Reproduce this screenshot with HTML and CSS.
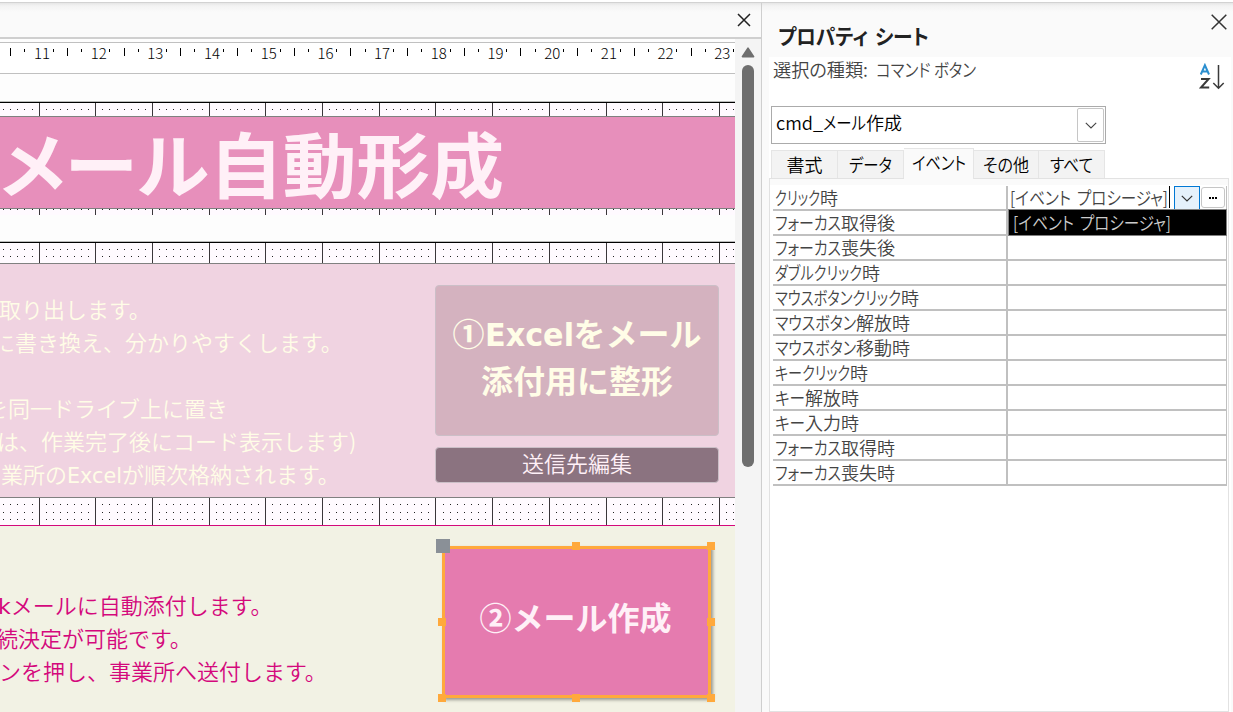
FILE: index.html
```html
<!DOCTYPE html>
<html lang="ja">
<head>
    <meta charset="UTF-8">
    <meta name="viewport" content="width=device-width, initial-scale=1.0">
    <title>プロパティ シート</title>
    <link rel="stylesheet" href="styles.css">
</head>
<body>
    <div class="top-edge"></div>
    <div class="workspace">
        <div class="designer">
            <div class="tab-bar">
                <svg width="14" height="14" viewBox="0 0 14 14"><path d="M1 1L13 13M13 1L1 13" stroke="#222" stroke-width="1.5"/></svg>
            </div>
            <div class="designer-body">
                <div class="form">
                    <svg class="ruler" id="ruler" width="735" height="32"></svg>
                    <div class="blank blank-top"></div>
                    <svg class="grid" data-dots="6" width="735" height="13"></svg>
                    <div class="form-header"><span class="fit" data-w="504">メール自動形成</span></div>
                    <svg class="grid" data-dots="0" width="735" height="6"></svg>
                    <div class="blank blank-mid"></div>
                    <svg class="grid" data-dots="6,13" width="735" height="20"></svg>
                    <div class="step step-one">
                        <div class="notes">
                            <p class="s1">取り出します。</p>
                            <p class="s2">に書き換え、分かりやすくします。</p>
                            <p></p>
                            <p class="s3">を同一ドライブ上に置き</p>
                            <p class="s4">は、作業完了後にコード表示します)</p>
                            <p class="s5">業所の<span class="latin fit" data-w="55">Excel</span>が順次格納されます。</p>
                        </div>
                        <div class="buttons">
                            <div class="btn btn-main">①<span class="latin fit" data-w="89">Excel</span>をメール<br>添付用に整形</div>
                            <div class="btn btn-edit">送信先編集</div>
                        </div>
                    </div>
                    <svg class="grid" data-dots="6,14,21" width="735" height="27"></svg>
                    <div class="step step-two">
                        <div class="notes">
                            <p class="s6"><span class="latin">k</span>メールに自動添付します。</p>
                            <p class="s7">続決定が可能です。</p>
                            <p class="s8">ンを押し、事業所へ送付します。</p>
                        </div>
                        <div class="selected">
                            ②メール作成
                            <i class="handle move"></i>
                            <i class="handle n"></i>
                            <i class="handle ne"></i>
                            <i class="handle w"></i>
                            <i class="handle e"></i>
                            <i class="handle sw"></i>
                            <i class="handle s"></i>
                            <i class="handle se"></i>
                        </div>
                    </div>
                </div>
                <div class="scrollbar">
                    <svg width="14" height="11" viewBox="0 0 14 11"><path d="M7 1.2L12.6 9.6H1.4Z" fill="#6e6e6e" stroke="#6e6e6e" stroke-width="1.6" stroke-linejoin="round"/></svg>
                    <div class="thumb"></div>
                </div>
            </div>
        </div>

        <div class="panel">
            <div class="panel-title">
                <span><span class="fit" data-w="90">プロパティ</span><span class="fit second" data-w="54">シート</span></span>
                <svg width="16" height="16" viewBox="0 0 16 16"><path d="M.7 .7L15.3 15.3M15.3 .7L.7 15.3" stroke="#333" stroke-width="1.5"/></svg>
            </div>
            <div class="panel-body">
                <div class="kind">
                    <span><span class="fit" data-w="95">選択の種類:</span><span class="fit second" data-w="100">コマンド ボタン</span></span>
                    <svg class="sort" width="26" height="28" viewBox="0 0 26 28">
                        <g fill="none" stroke-width="2">
                            <path d="M1.8 11.5L5.9 2.2L10 11.5M3.2 8.6H8.6" stroke="#2b8fd0"/>
                            <path d="M2 16H9.6L2 24.5H10.2" stroke="#3a3a3a"/>
                            <path d="M19.5 2V25M14.3 20L19.5 25.2L24.7 20" stroke="#3a3a3a" stroke-width="1.5"/>
                        </g>
                    </svg>
                </div>
                <div class="combo">
                    <span class="fit" data-w="47">cmd_</span><span class="fit" data-w="43">メール</span><span class="fit" data-w="36">作成</span>
                    <div class="combo-arrow"><svg width="12" height="7" viewBox="0 0 12 7"><path d="M.8 .8L6 6L11.2 .8" fill="none" stroke="#444" stroke-width="1.1"/></svg></div>
                </div>
                <div class="tabs">
                    <div class="tab">書式</div>
                    <div class="tab"><span class="fit" data-w="43">データ</span></div>
                    <div class="tab active"><span class="fit" data-w="54">イベント</span></div>
                    <div class="tab"><span class="fit" data-w="46">その他</span></div>
                    <div class="tab"><span class="fit" data-w="43">すべて</span></div>
                </div>
                <div class="sheet">
                    <div class="row">
                        <div class="name"><span class="fit" data-w="45">クリック</span>時</div>
                        <div class="value editing">
                            <span class="fit" data-w="61">[イベント</span><span class="fit second" data-w="91">プロシージャ]</span>
                            <i class="caret"></i>
                            <div class="drop"><svg width="12" height="7" viewBox="0 0 12 7"><path d="M.8 .8L6 6L11.2 .8" fill="none" stroke="#333" stroke-width="1.2"/></svg></div>
                            <div class="build"><i></i><i></i><i></i></div>
                            <div class="option"><span class="fit" data-w="61">[イベント</span><span class="fit second" data-w="91">プロシージャ]</span></div>
                        </div>
                    </div>
                    <div class="row"><div class="name"><span class="fit" data-w="66">フォーカス</span>取得後</div><div class="value"></div></div>
                    <div class="row"><div class="name"><span class="fit" data-w="66">フォーカス</span>喪失後</div><div class="value"></div></div>
                    <div class="row"><div class="name"><span class="fit" data-w="87">ダブルクリック</span>時</div><div class="value"></div></div>
                    <div class="row"><div class="name"><span class="fit" data-w="126">マウスボタンクリック</span>時</div><div class="value"></div></div>
                    <div class="row"><div class="name"><span class="fit" data-w="81">マウスボタン</span>解放時</div><div class="value"></div></div>
                    <div class="row"><div class="name"><span class="fit" data-w="81">マウスボタン</span>移動時</div><div class="value"></div></div>
                    <div class="row"><div class="name"><span class="fit" data-w="75">キークリック</span>時</div><div class="value"></div></div>
                    <div class="row"><div class="name"><span class="fit" data-w="30">キー</span>解放時</div><div class="value"></div></div>
                    <div class="row"><div class="name"><span class="fit" data-w="30">キー</span>入力時</div><div class="value"></div></div>
                    <div class="row"><div class="name"><span class="fit" data-w="66">フォーカス</span>取得時</div><div class="value"></div></div>
                    <div class="row"><div class="name"><span class="fit" data-w="66">フォーカス</span>喪失時</div><div class="value"></div></div>
                </div>
            </div>
        </div>
    </div>
    <script src="script.js"></script>
</body>
</html>
```
FILE: styles.css
```css
* {
    box-sizing: border-box;
}
body {
    margin: 0;
    height: 712px;
    overflow: hidden;
    background-color: #fafafa;
    font-family: "Noto Sans CJK JP", sans-serif;
    font-weight: 350;
    color: #444;
}
svg {
    display: block;
    flex: none;
}
.top-edge {
    height: 12px;
    background: linear-gradient(#fff 2px, #d2d2d2 2px, #d2d2d2 3px, #e6e6e6 3px, #f3f3f3 6px, #fafafa 12px);
}
.workspace {
    display: flex;
    height: 709px;
    margin-top: -9px;
}
.fit {
    display: inline-block;
    white-space: nowrap;
    transform-origin: left;
    font-feature-settings: "palt";
}
.latin {
    font-family: "DejaVu Sans", sans-serif;
}

/* form designer */
.designer {
    width: 762px;
    border-right: 1px solid #cfcfcf;
}
.tab-bar {
    display: flex;
    justify-content: flex-end;
    height: 36px;
    padding: 10px 10px 0 0;
    border-bottom: 2px solid #cfcfcf;
}
.designer-body {
    display: flex;
    height: 673px;
    background-color: #f4f4f4;
}
.form {
    width: 735px;
    overflow: hidden;
    background-color: #fdfdfd;
}
.ruler {
    margin-top: 3px;
    border-top: 1px solid #c0c0c0;
    border-bottom: 1px solid #c0c0c0;
    background-color: #fff;
    font-size: 15px;
    font-weight: 300;
}
.blank {
    border-bottom: 1px solid #000;
    box-shadow: inset 0 -1px #bbb;
}
.blank-top {
    height: 29px;
}
.blank-mid {
    height: 28px;
}
.grid {
    background-color: #fffaff;
}
.form-header {
    display: flex;
    align-items: center;
    height: 93px;
    padding-bottom: 4px;
    border-top: 1px solid #808080;
    border-bottom: 1px solid #808080;
    background-color: #e78fbb;
    color: #fff0f7;
    font-size: 71px;
    font-weight: bold;
    line-height: 80px;
}
.step {
    display: flex;
    justify-content: space-between;
}
.step-one {
    height: 235px;
    padding: 21px 16px 0 0;
    border-top: 1px solid #808080;
    border-bottom: 1px solid #808080;
    background-color: #f0d3e1;
    color: #fffde7;
}
.step-two {
    height: 188px;
    padding: 20px 24px 0 0;
    border-top: 1px solid #d4087c;
    background-color: #f2f2e4;
    color: #d4087c;
}
.notes {
    font-size: 22px;
    line-height: 33px;
    white-space: nowrap;
}
.notes .latin {
    font-weight: 400;
    line-height: 30px;
}
.notes p {
    height: 33px;
    margin: 0;
}
.step-one .notes {
    padding-top: 7px;
}
.step-two .notes {
    padding-top: 42px;
}
.s1 { text-indent: -1px; }
.s2 { text-indent: -7px; }
.s3 { text-indent: -14px; }
.s4 { text-indent: -3px; }
.s5 { padding-left: 1px; }
.s6 { text-indent: -2px; }
.s7 { text-indent: -4px; }
.s8 { text-indent: -1px; }
.buttons {
    display: flex;
    flex-direction: column;
    gap: 11px;
}
.btn {
    width: 284px;
    border: 1px solid #cbbfc7;
    border-radius: 4px;
    text-align: center;
}
.btn-main {
    height: 151px;
    padding-top: 23px;
    background-color: #d4b2bf;
    font-size: 32px;
    font-weight: bold;
    line-height: 47px;
}
.btn-main .latin {
    line-height: 40px;
}
.btn-edit {
    height: 36px;
    background-color: #8b7380;
    color: #fff0f7;
    font-size: 22px;
    line-height: 28px;
}
.selected {
    position: relative;
    width: 269px;
    height: 152px;
    padding-top: 42px;
    border: 3px solid #ffa93c;
    background-color: #e57baf;
    box-shadow: 2px 2px 3px #9a9a90;
    color: #fff0f7;
    font-size: 32px;
    font-weight: bold;
    line-height: 50px;
    text-align: center;
    text-indent: -2px;
}
.handle {
    position: absolute;
    width: 8px;
    height: 8px;
    background-color: #ffa93c;
}
.n, .ne { top: -7px; }
.w, .e { top: 69px; }
.sw, .s, .se { top: 145px; }
.sw, .w { left: -7px; }
.n, .s { left: 127px; }
.ne, .e, .se { left: 262px; }
.move {
    top: -10px;
    left: -9px;
    width: 14px;
    height: 14px;
    background-color: #8a9097;
}
.scrollbar {
    display: flex;
    flex-direction: column;
    align-items: center;
    gap: 7px;
    width: 26px;
    padding-top: 8px;
    border-radius: 12px 12px 0 0;
}
.thumb {
    width: 12px;
    height: 402px;
    border-radius: 6px;
    background-color: #6e6e6e;
}

/* property sheet */
.panel {
    width: 471px;
    padding: 0 2px 0 7px;
}
.panel-title {
    display: flex;
    justify-content: space-between;
    height: 54px;
    padding: 11px 4px 0 9px;
    color: #222;
    font-size: 21px;
    font-weight: bold;
    line-height: 42px;
}
.panel-title .second {
    margin-left: 7px;
}
.panel-body {
    height: 655px;
    background-color: #fff;
    font-size: 18px;
}
.kind {
    display: flex;
    justify-content: space-between;
    height: 49px;
    padding: 0 6px 0 4px;
    line-height: 25px;
}
.kind .second {
    margin-left: 8px;
}
.sort {
    margin-top: 6px;
}
.combo {
    display: flex;
    width: 335px;
    height: 38px;
    margin-left: 2px;
    padding: 1px 1px 1px 4px;
    border: 1px solid #ababab;
    color: #000;
    line-height: 28px;
}
.combo-arrow {
    display: flex;
    align-items: center;
    justify-content: center;
    width: 27px;
    height: 34px;
    margin-left: auto;
    border: 1px solid #c6c6c6;
    border-radius: 2px;
}
.tabs {
    display: flex;
    align-items: flex-end;
    height: 34px;
    padding-left: 2px;
}
.tab {
    width: 66px;
    height: 28px;
    border: 1px solid #e5e5e5;
    border-width: 1px 1px 0 0;
    background-color: #f3f3f3;
    color: #000;
    line-height: 26px;
    text-align: center;
}
.tab:first-child {
    width: 67px;
    border-left-width: 1px;
}
.tab.active {
    width: 70px;
    height: 31px;
    margin-bottom: -1px;
    background-color: #fafafa;
}
.tab.active + .tab {
    width: 65px;
}
.sheet {
    width: 460px;
    height: 534px;
    padding: 7px 1px 0 3px;
    border: 1px solid #e2e2e2;
    background: linear-gradient(#fafafa 6px, #fff 6px);
}
.row {
    display: flex;
    height: 25px;
    line-height: 22px;
}
.name {
    width: 235px;
    padding-left: 2px;
    border-right: 2px solid #c0c0c0;
    border-bottom: 2px solid #c0c0c0;
    white-space: nowrap;
}
.value {
    width: 219px;
    border-right: 1px solid #c0c0c0;
    border-bottom: 2px solid #c0c0c0;
}
.value .second {
    margin-left: 6px;
}
.editing {
    position: relative;
    display: flex;
    padding-left: 2px;
}
.caret {
    width: 1px;
    height: 22px;
    margin-left: 1px;
    background-color: #000;
}
.drop, .build {
    display: flex;
    align-items: center;
    justify-content: center;
    height: 24px;
}
.drop {
    width: 26px;
    margin-left: 4px;
    border: 1px solid #0078d4;
    background-color: #e5f1fb;
}
.build {
    gap: 1px;
    width: 24px;
    height: 21px;
    margin: 1px 0 0 1px;
    border: 1px solid #c6c6c6;
    border-radius: 3px;
}
.build i {
    width: 2px;
    height: 2px;
    background-color: #000;
}
.option {
    position: absolute;
    top: 23px;
    left: 0;
    width: 219px;
    height: 27px;
    padding-left: 4px;
    border: 1px solid #808080;
    background-color: #000;
    color: #ccc;
    line-height: 24px;
}
```
FILE: script.js
```js
const CM = 56.69;
const ORIGIN = 38.6; // x of the 11 cm grid line

function rect(x, y, w, h, color) {
    return `<rect x="${x}" y="${y}" width="${w}" height="${h}" fill="${color}"/>`;
}

// grid strips: one line per centimetre, dots at each eighth
document.querySelectorAll('.grid').forEach(grid => {
    const rows = grid.dataset.dots.split(',').map(Number);
    const height = Number(grid.getAttribute('height'));
    let html = '';
    for (let i = -8; i < 104; i++) {
        const x = Math.round(ORIGIN + i * CM / 8);
        if (i % 8 === 0) {
            html += rect(x, 0, 1, height, '#3a363a');
        } else {
            rows.forEach(y => html += rect(x, y, 1, 1, '#222'));
        }
    }
    grid.innerHTML = html;
});

// ruler
let marks = '';
for (let n = 0; n <= 12; n++) {
    const x = ORIGIN + n * CM;
    marks += rect(Math.round(x - CM / 2), 5, 1, 8, '#000');
    marks += rect(Math.round(x - CM / 4), 6, 1, 3, '#000');
    marks += rect(Math.round(x + CM / 4), 6, 1, 3, '#000');
    marks += `<text x="${x + 3.4}" y="16" text-anchor="middle">${n + 11}</text>`;
}
document.getElementById('ruler').innerHTML = marks;

// squeeze proportional kana to its column width
document.querySelectorAll('.fit').forEach(el => {
    const natural = el.getBoundingClientRect().width;
    el.style.width = el.dataset.w + 'px';
    el.style.transform = `scaleX(${el.dataset.w / natural})`;
});
```
